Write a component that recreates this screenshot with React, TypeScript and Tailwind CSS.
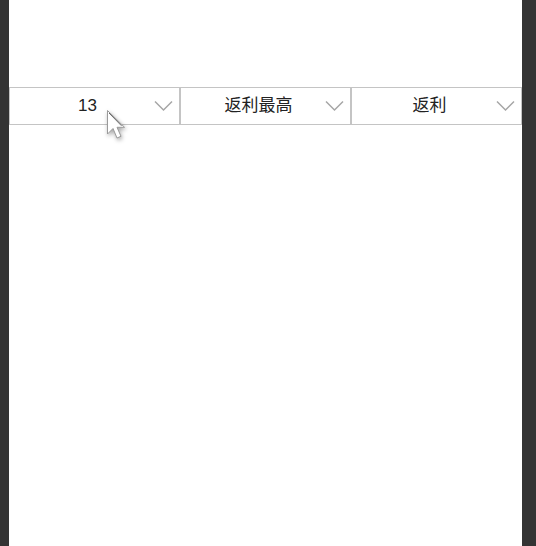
import React from 'react';

const filters = ['13', '返利最高', '返利'];

const Chevron = () => (
  <svg width="19" height="12" viewBox="0 0 19 12" className="absolute right-[6px] top-[12px]">
    <path d="M1 1.5 L9.5 10 L18 1.5" fill="none" stroke="#a6a6a6" strokeWidth="1.5" />
  </svg>
);

const Cursor = () => (
  <svg
    width="26"
    height="38"
    viewBox="0 0 26 38"
    className="absolute left-[106px] top-[109px] drop-shadow-[1px_2px_2px_rgba(0,0,0,0.35)]"
  >
    <path
      d="M1.5 1.5 L1.5 25 L7 19.5 L11 29 L15 27.3 L11 18.3 L18.5 18.3 Z"
      fill="#fff"
      stroke="#9a9a9a"
      strokeWidth="1"
      strokeLinejoin="round"
    />
    <path d="M3 4 L15.5 16.8" stroke="#555" strokeWidth="0.9" />
  </svg>
);

export default function App() {
  return (
    <div className="relative flex h-[546px] w-[536px] bg-[#343434]">
      <div className="ml-[9px] h-full w-[513px] bg-white">
        <div className="mt-[87px] flex">
          {filters.map(f => (
            <div
              key={f}
              className="relative flex h-[38px] w-[171px] items-center justify-center border border-[#c4c4c4] pr-[14px] text-[17px] text-[#222]"
              style={{ fontFamily: '"Liberation Sans", "Noto Sans CJK SC", sans-serif' }}
            >
              {f}
              <Chevron />
            </div>
          ))}
        </div>
      </div>
      <Cursor />
    </div>
  );
}
